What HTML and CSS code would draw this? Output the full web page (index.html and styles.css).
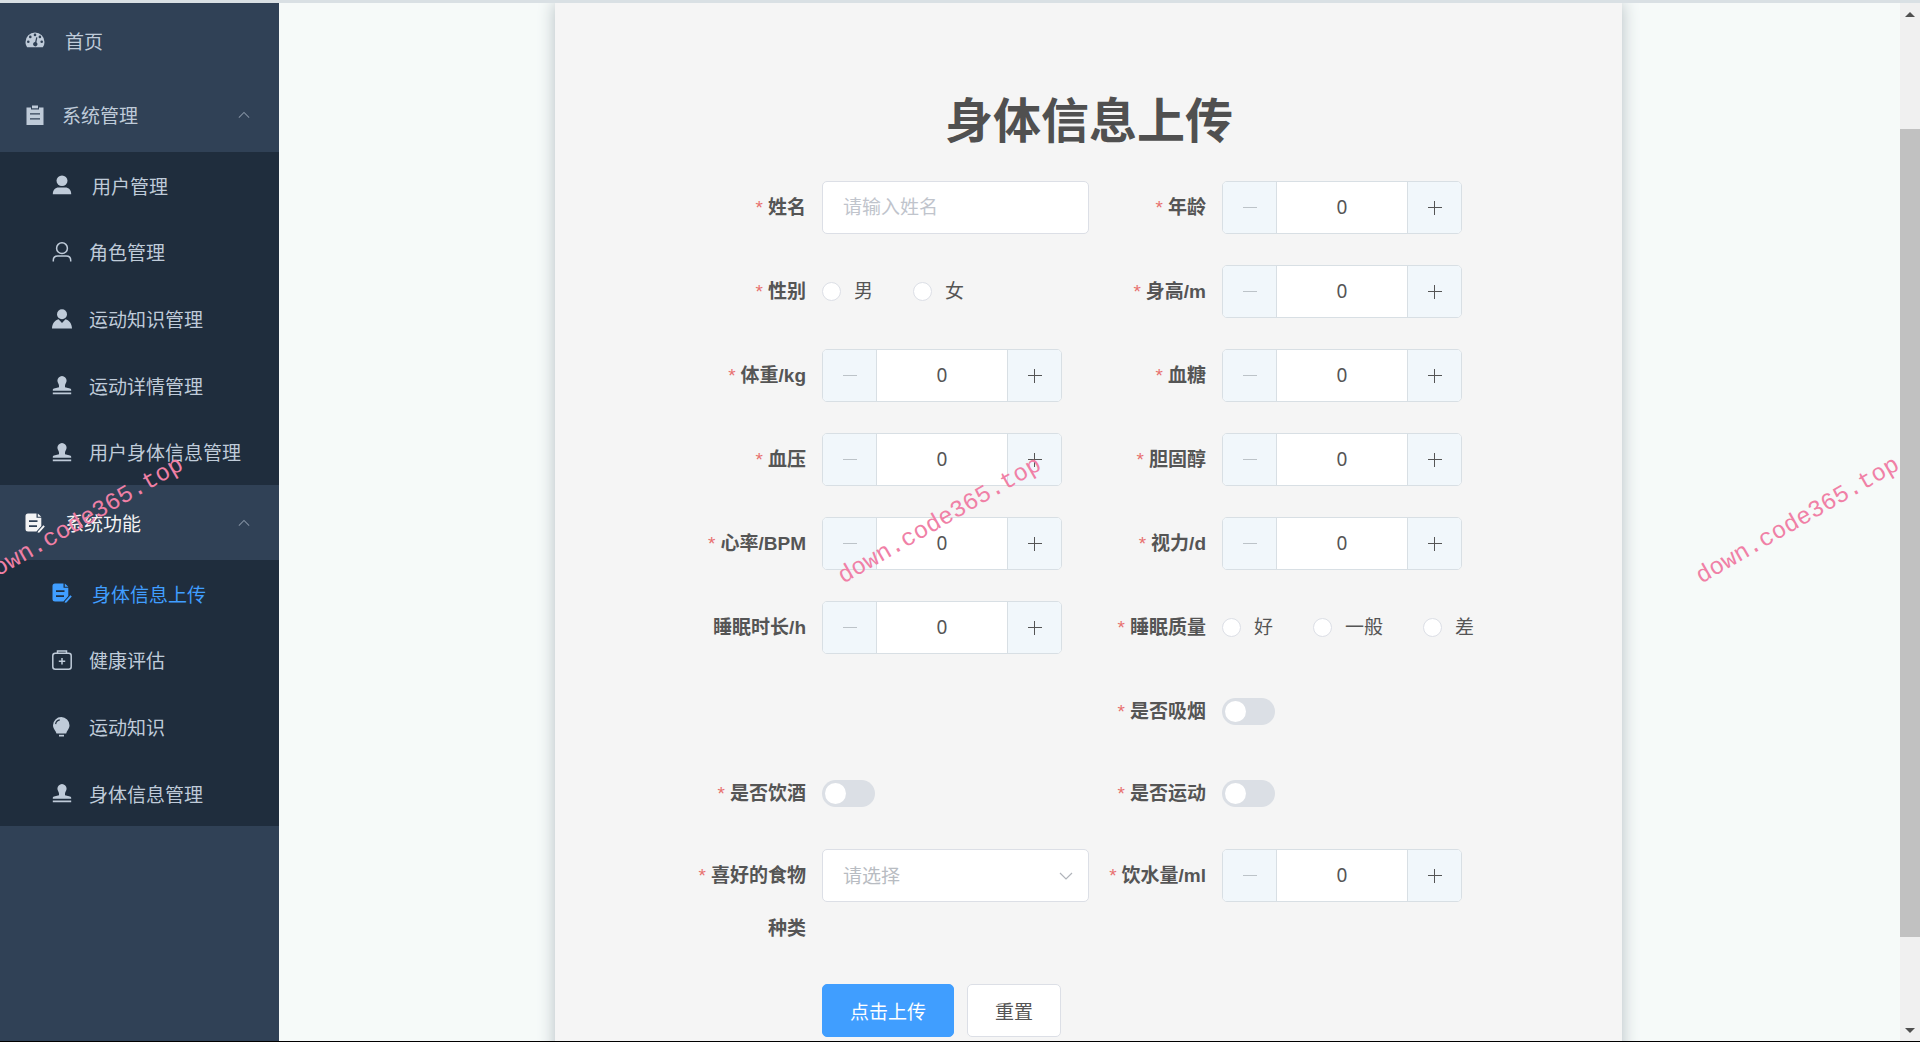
FILE: index.html
```html
<!DOCTYPE html>
<html lang="zh-CN">
<head>
  <meta charset="UTF-8" />
  <title>身体信息上传</title>
  <link rel="stylesheet" href="styles.css">
</head>
<body>
  <!-- shared icon shapes -->
  <svg class="sprite" aria-hidden="true">
    <symbol id="i-dashboard" viewBox="0 0 20 20">
      <path fill-rule="evenodd" d="M10 2.500a9.500 9.500 0 0 0-9.500 9.500c0 2 .6 3.800 1.700 5.300h15.600a9 9 0 0 0 1.700-5.300A9.500 9.500 0 0 0 10 2.500zM10 3.600a1.300 1.300 0 1 1 0 2.600 1.300 1.300 0 0 1 0-2.600zM5.300 5.600a1.300 1.300 0 1 1 0 2.600 1.300 1.300 0 0 1 0-2.600zM14.900 5.600a1.300 1.300 0 1 1 0 2.600 1.300 1.300 0 0 1 0-2.600zM3.300 10.400a1.300 1.300 0 1 1 0 2.600 1.300 1.300 0 0 1 0-2.600zM16.700 10.400a1.300 1.300 0 1 1 0 2.600 1.300 1.300 0 0 1 0-2.600zM11.200 7.300l1.200.3-1 4.700a2.200 2.200 0 1 1-1.300-.3z"/>
    </symbol>
    <symbol id="i-clipboard" viewBox="0 0 20 20">
      <path fill-rule="evenodd" d="M1.500 2.500H6V4.500h8V2.500h4.500V20h-17zM5 8.300v1.200h10V8.300zM5 13.300v1.200h10v-1.200z"/>
      <path d="M7 .5h6v2.800H7z"/>
    </symbol>
    <symbol id="i-user" viewBox="0 0 20 20">
      <ellipse cx="10" cy="5.700" rx="5.500" ry="5.200"/>
      <path d="M.8 19.200c0-4.400 2.400-6.700 6-6.700h6.400c3.600 0 6 2.300 6 6.700z"/>
    </symbol>
    <symbol id="i-user-line" viewBox="0 0 20 20">
      <g fill="none" stroke="currentColor" stroke-width="1.500">
        <circle cx="10" cy="6.200" r="5.400"/>
        <path d="M1.300 19.500v-1.200c0-2.700 1.800-4.300 4.400-4.300h8.600c2.600 0 4.400 1.600 4.400 4.300v1.200"/>
      </g>
    </symbol>
    <symbol id="i-custom" viewBox="0 0 20 20">
      <circle cx="10" cy="5.300" r="5"/>
      <path d="M6.500 10.300 10 14l3.500-3.700c4 1.200 6.300 4.500 6.500 9.200H0c.2-4.700 2.500-8 6.500-9.200z"/>
    </symbol>
    <symbol id="i-stamp" viewBox="0 0 20 20">
      <path d="M10 1a4.800 4.800 0 0 1 4.600 4.800c0 1.800-1.600 3.200-1.600 5v1.400l5 1.300c.8.200 1.200.8 1.200 1.500v.8H.8V15c0-.7.4-1.300 1.200-1.500l5-1.300v-1.400c0-1.800-1.600-3.200-1.600-5A4.800 4.800 0 0 1 10 1zM.8 17.500h18.400v1.700H.8z"/>
    </symbol>
    <symbol id="i-order" viewBox="0 0 20 20">
      <path fill-rule="evenodd" d="M3 .5h8.500v4.300h4.800V13l-4.800 5.500H3A2.500 2.500 0 0 1 .5 16V3A2.500 2.500 0 0 1 3 .5zM4 7.300v1.600h8.500V7.300zM4 12.300v1.600h8v-1.600z"/>
      <path d="M12.800.4l3.500 3.300h-3.500zM13 18.200l5.400-6 1.400 1.300-5.300 5.900-1.900.4z"/>
    </symbol>
    <symbol id="i-aid" viewBox="0 0 20 20">
      <g fill="none" stroke="currentColor" stroke-width="1.500">
        <rect x=".8" y="3.200" width="18.400" height="16" rx="2.500"/>
        <path d="M5.500 3V1h9v2M10 8v6.400M6.800 11.200h6.400"/>
      </g>
    </symbol>
    <symbol id="i-bulb" viewBox="0 0 20 20">
      <path d="M9.300 0a8.300 8.300 0 0 1 8.200 8.200c0 3.500-2.500 5-3.300 8.300H4.500C3.600 13.200 1 11.700 1 8.200A8.300 8.300 0 0 1 9.300 0z"/>
      <path d="M7 17.800h5v1.700H7z"/>
      <path d="M3.600 7.200a5 5 0 0 1 4.200-4.300" fill="none" stroke="#1f2d3d" stroke-width="1.200"/>
    </symbol>
    <symbol id="i-arrow" viewBox="0 0 14 8">
      <path d="M1 7l6-6 6 6" fill="none" stroke="currentColor" stroke-width="1.200"/>
    </symbol>
    <symbol id="i-minus" viewBox="0 0 16 16">
      <path d="M1 7.500h14" stroke="currentColor"/>
    </symbol>
    <symbol id="i-plus" viewBox="0 0 16 16">
      <path d="M1 7.500h14M7.500 1v14" stroke="currentColor"/>
    </symbol>
  </svg>

  <div class="app">
    <nav class="sidebar">
      <a class="menu-item home" href="#"><svg class="icon spaced"><use href="#i-dashboard"/></svg>首页</a>

      <a class="menu-item" href="#"><svg class="icon"><use href="#i-clipboard"/></svg>系统管理<svg class="arrow"><use href="#i-arrow"/></svg></a>
      <ul class="submenu">
        <li><a href="#"><svg class="icon spaced"><use href="#i-user"/></svg>用户管理</a></li>
        <li><a href="#"><svg class="icon"><use href="#i-user-line"/></svg>角色管理</a></li>
        <li><a href="#"><svg class="icon"><use href="#i-custom"/></svg>运动知识管理</a></li>
        <li><a href="#"><svg class="icon"><use href="#i-stamp"/></svg>运动详情管理</a></li>
        <li><a href="#"><svg class="icon"><use href="#i-stamp"/></svg>用户身体信息管理</a></li>
      </ul>

      <a class="menu-item opened" href="#"><svg class="icon spaced"><use href="#i-order"/></svg>系统功能<svg class="arrow"><use href="#i-arrow"/></svg></a>
      <ul class="submenu">
        <li><a class="active" href="#"><svg class="icon spaced"><use href="#i-order"/></svg>身体信息上传</a></li>
        <li><a href="#"><svg class="icon"><use href="#i-aid"/></svg>健康评估</a></li>
        <li><a href="#"><svg class="icon"><use href="#i-bulb"/></svg>运动知识</a></li>
        <li><a href="#"><svg class="icon"><use href="#i-stamp"/></svg>身体信息管理</a></li>
      </ul>
    </nav>

    <main class="main">
      <form class="panel">
        <h1 class="title">身体信息上传</h1>

        <div class="row">
          <div class="item">
            <label class="label required" for="name">姓名</label>
            <input class="text-input" type="text" id="name" placeholder="请输入姓名">
          </div>
          <div class="item">
            <label class="label required" for="age">年龄</label>
            <div class="number">
              <button type="button" class="minus" aria-label="减少"><svg><use href="#i-minus"/></svg></button>
              <input type="number" id="age" value="0">
              <button type="button" aria-label="增加"><svg><use href="#i-plus"/></svg></button>
            </div>
          </div>
        </div>

        <div class="row">
          <div class="item" role="radiogroup" aria-labelledby="sexLabel">
            <span class="label required" id="sexLabel">性别</span>
            <label class="radio"><input type="radio" name="sex">男</label>
            <label class="radio"><input type="radio" name="sex">女</label>
          </div>
          <div class="item">
            <label class="label required" for="height">身高/m</label>
            <div class="number">
              <button type="button" class="minus" aria-label="减少"><svg><use href="#i-minus"/></svg></button>
              <input type="number" id="height" value="0">
              <button type="button" aria-label="增加"><svg><use href="#i-plus"/></svg></button>
            </div>
          </div>
        </div>

        <div class="row">
          <div class="item">
            <label class="label required" for="weight">体重/kg</label>
            <div class="number">
              <button type="button" class="minus" aria-label="减少"><svg><use href="#i-minus"/></svg></button>
              <input type="number" id="weight" value="0">
              <button type="button" aria-label="增加"><svg><use href="#i-plus"/></svg></button>
            </div>
          </div>
          <div class="item">
            <label class="label required" for="sugar">血糖</label>
            <div class="number">
              <button type="button" class="minus" aria-label="减少"><svg><use href="#i-minus"/></svg></button>
              <input type="number" id="sugar" value="0">
              <button type="button" aria-label="增加"><svg><use href="#i-plus"/></svg></button>
            </div>
          </div>
        </div>

        <div class="row">
          <div class="item">
            <label class="label required" for="pressure">血压</label>
            <div class="number">
              <button type="button" class="minus" aria-label="减少"><svg><use href="#i-minus"/></svg></button>
              <input type="number" id="pressure" value="0">
              <button type="button" aria-label="增加"><svg><use href="#i-plus"/></svg></button>
            </div>
          </div>
          <div class="item">
            <label class="label required" for="cholesterol">胆固醇</label>
            <div class="number">
              <button type="button" class="minus" aria-label="减少"><svg><use href="#i-minus"/></svg></button>
              <input type="number" id="cholesterol" value="0">
              <button type="button" aria-label="增加"><svg><use href="#i-plus"/></svg></button>
            </div>
          </div>
        </div>

        <div class="row">
          <div class="item">
            <label class="label required" for="heart">心率/BPM</label>
            <div class="number">
              <button type="button" class="minus" aria-label="减少"><svg><use href="#i-minus"/></svg></button>
              <input type="number" id="heart" value="0">
              <button type="button" aria-label="增加"><svg><use href="#i-plus"/></svg></button>
            </div>
          </div>
          <div class="item">
            <label class="label required" for="vision">视力/d</label>
            <div class="number">
              <button type="button" class="minus" aria-label="减少"><svg><use href="#i-minus"/></svg></button>
              <input type="number" id="vision" value="0">
              <button type="button" aria-label="增加"><svg><use href="#i-plus"/></svg></button>
            </div>
          </div>
        </div>

        <div class="row">
          <div class="item">
            <label class="label" for="sleep">睡眠时长/h</label>
            <div class="number">
              <button type="button" class="minus" aria-label="减少"><svg><use href="#i-minus"/></svg></button>
              <input type="number" id="sleep" value="0">
              <button type="button" aria-label="增加"><svg><use href="#i-plus"/></svg></button>
            </div>
          </div>
          <div class="item" role="radiogroup" aria-labelledby="qualityLabel">
            <span class="label required" id="qualityLabel">睡眠质量</span>
            <label class="radio"><input type="radio" name="quality">好</label>
            <label class="radio"><input type="radio" name="quality">一般</label>
            <label class="radio"><input type="radio" name="quality">差</label>
          </div>
        </div>

        <div class="row compact">
          <div class="item"></div>
          <div class="item">
            <label class="label required" for="smoke">是否吸烟</label>
            <input class="switch" type="checkbox" id="smoke">
          </div>
        </div>

        <div class="row compact">
          <div class="item">
            <label class="label required" for="drink">是否饮酒</label>
            <input class="switch" type="checkbox" id="drink">
          </div>
          <div class="item">
            <label class="label required" for="sport">是否运动</label>
            <input class="switch" type="checkbox" id="sport">
          </div>
        </div>

        <div class="row compact">
          <div class="item">
            <label class="label required" for="food">喜好的食物种类</label>
            <div class="select">
              <select id="food"><option>请选择</option></select>
              <svg class="caret"><use href="#i-arrow"/></svg>
            </div>
          </div>
          <div class="item">
            <label class="label required" for="water">饮水量/ml</label>
            <div class="number">
              <button type="button" class="minus" aria-label="减少"><svg><use href="#i-minus"/></svg></button>
              <input type="number" id="water" value="0">
              <button type="button" aria-label="增加"><svg><use href="#i-plus"/></svg></button>
            </div>
          </div>
        </div>

        <div class="actions">
          <button type="button" class="btn primary">点击上传</button>
          <button type="reset" class="btn">重置</button>
        </div>
      </form>
    </main>

    <div class="scrollbar" aria-hidden="true">
      <div class="scroll-btn up"></div>
      <div class="track-top"></div>
      <div class="thumb"></div>
      <div class="track-bottom"></div>
      <div class="scroll-btn down"></div>
    </div>
  </div>

  <div class="watermarks" aria-hidden="true">
    <span>down.code365.top</span>
    <span>down.code365.top</span>
    <span>down.code365.top</span>
  </div>
</body>
</html>
```

FILE: styles.css
```css
* { box-sizing: border-box; }
body { margin: 0; font-family: "Liberation Sans", "Noto Sans CJK SC", sans-serif; font-size: 19px; color: #555; overflow: hidden; }
input, select, button { font: inherit; color: inherit; margin: 0; }
a { color: inherit; text-decoration: none; }
.sprite { position: absolute; width: 0; height: 0; }
symbol { fill: currentColor; }

.app { display: flex; height: 100vh; border-top: 3px solid #d9e0e4; border-bottom: 1px solid #000; background: #f6faf9; }

/* sidebar */
.sidebar { flex: 0 0 279px; background: #304156; color: #bfcbd9; overflow: hidden; }
.menu-item { display: flex; align-items: center; height: 75px; padding: 0 29px 0 25px; }
.menu-item.home { height: 74px; }
.menu-item.opened { color: #f4f4f5; }
.submenu { list-style: none; margin: 0; padding: 0; background: #1f2d3d; }
.submenu a { display: flex; align-items: center; height: 67px; padding-left: 52px; }
.submenu li:nth-child(3n+1) a { height: 66px; }
.submenu a.active { color: #409eff; }
.icon { width: 20px; height: 20px; margin-right: 17px; flex: none; fill: currentColor; }
.icon.spaced { margin-right: 20px; }
.arrow { width: 12px; height: 8px; margin-left: auto; color: #8391a2; }

/* form */
.main { flex: 1; min-width: 0; padding-right: 2px; overflow: hidden; }
.panel { width: 1067px; min-height: 120vh; margin: 0 auto; padding: 91px 133px 0 134px; background: #f5f5f5; box-shadow: 0 0 16px #b4bec2; }
.title { margin: 0 0 31px; font-size: 48px; line-height: 56px; text-align: center; color: #505050; }
.row { display: flex; margin-bottom: 31px; }
.row.compact { margin-bottom: 29px; }
.item { display: flex; flex: 1; min-height: 53px; line-height: 53px; white-space: nowrap; }
.label { flex: 0 0 133px; padding-right: 16px; text-align: right; font-weight: bold; white-space: normal; color: #555; }
.label.required::before { content: "*"; margin-right: 5px; font-weight: normal; color: #e8706f; }

.text-input, .select select { width: 267px; height: 53px; padding: 0 20px; border: 1px solid #dcdfe6; border-radius: 5px; background: #fff; }
.text-input::placeholder { color: #c0c4cc; }
.select { position: relative; height: 53px; }
.select select { appearance: none; display: block; color: #b8bcc2; }
.caret { position: absolute; right: 16px; top: 23px; width: 14px; height: 8px; color: #b0b4ba; transform: rotate(180deg); }

.number { display: flex; width: 240px; height: 53px; border: 1px solid #d8dfe4; border-radius: 5px; background: #fff; overflow: hidden; }
.number button { display: flex; align-items: center; justify-content: center; width: 54px; padding: 0; border: 0; border-left: 1px solid #d8dfe4; background: #f1f7fb; color: #555; }
.number .minus { border-left: 0; border-right: 1px solid #d8dfe4; color: #bcc3c8; }
.number svg { width: 16px; height: 16px; }
.number input { flex: 1; min-width: 0; padding: 0; border: 0; background: none; font-family: "Noto Sans", sans-serif; text-align: center; appearance: textfield; }
.number input::-webkit-inner-spin-button { appearance: none; margin: 0; }

.radio { display: flex; align-items: center; margin-right: 40px; }
.radio input { appearance: none; width: 19px; height: 19px; margin-right: 13px; border: 1px solid #dcdfe6; border-radius: 50%; background: #fff; }
.radio input:checked { border: 6px solid #409eff; }
.item .radio:last-child { margin-right: 0; }

.switch { appearance: none; align-self: center; width: 53px; height: 27px; padding: 3px; border-radius: 14px; background: #dbdfe5; }
.switch::before { content: ""; display: block; width: 21px; height: 21px; border-radius: 50%; background: #fff; }
.switch:checked { background: #409eff; }
.switch:checked::before { margin-left: auto; }

.actions { display: flex; gap: 13px; padding-left: 133px; }
.btn { height: 53px; padding: 0 27px; border: 1px solid #dcdfe6; border-radius: 5px; background: #fff; }
.btn.primary { border-color: #409eff; background: #409eff; color: #fff; }

/* page scrollbar */
.scrollbar { display: flex; flex-direction: column; flex: 0 0 20px; background: #f0f0f0; }
.scroll-btn { display: flex; align-items: center; justify-content: center; height: 22px; }
.scroll-btn::before { content: ""; border: 5px solid transparent; border-top-width: 0; border-bottom-color: #505050; }
.scroll-btn.down::before { border-width: 5px 5px 0; border-top-color: #505050; }
.track-top { flex: 104; }
.thumb { flex: 808; background: #c1c1c1; }
.track-bottom { flex: 82; }

/* watermark */
.watermarks { position: absolute; inset: 0; display: flex; align-items: center; justify-content: center; padding-right: 40px; overflow: hidden; pointer-events: none; }
.watermarks span { flex: 0 0 858px; font: 24px/40px "Liberation Mono", monospace; text-align: center; color: #f080a6; transform: rotate(-30deg); }
```
